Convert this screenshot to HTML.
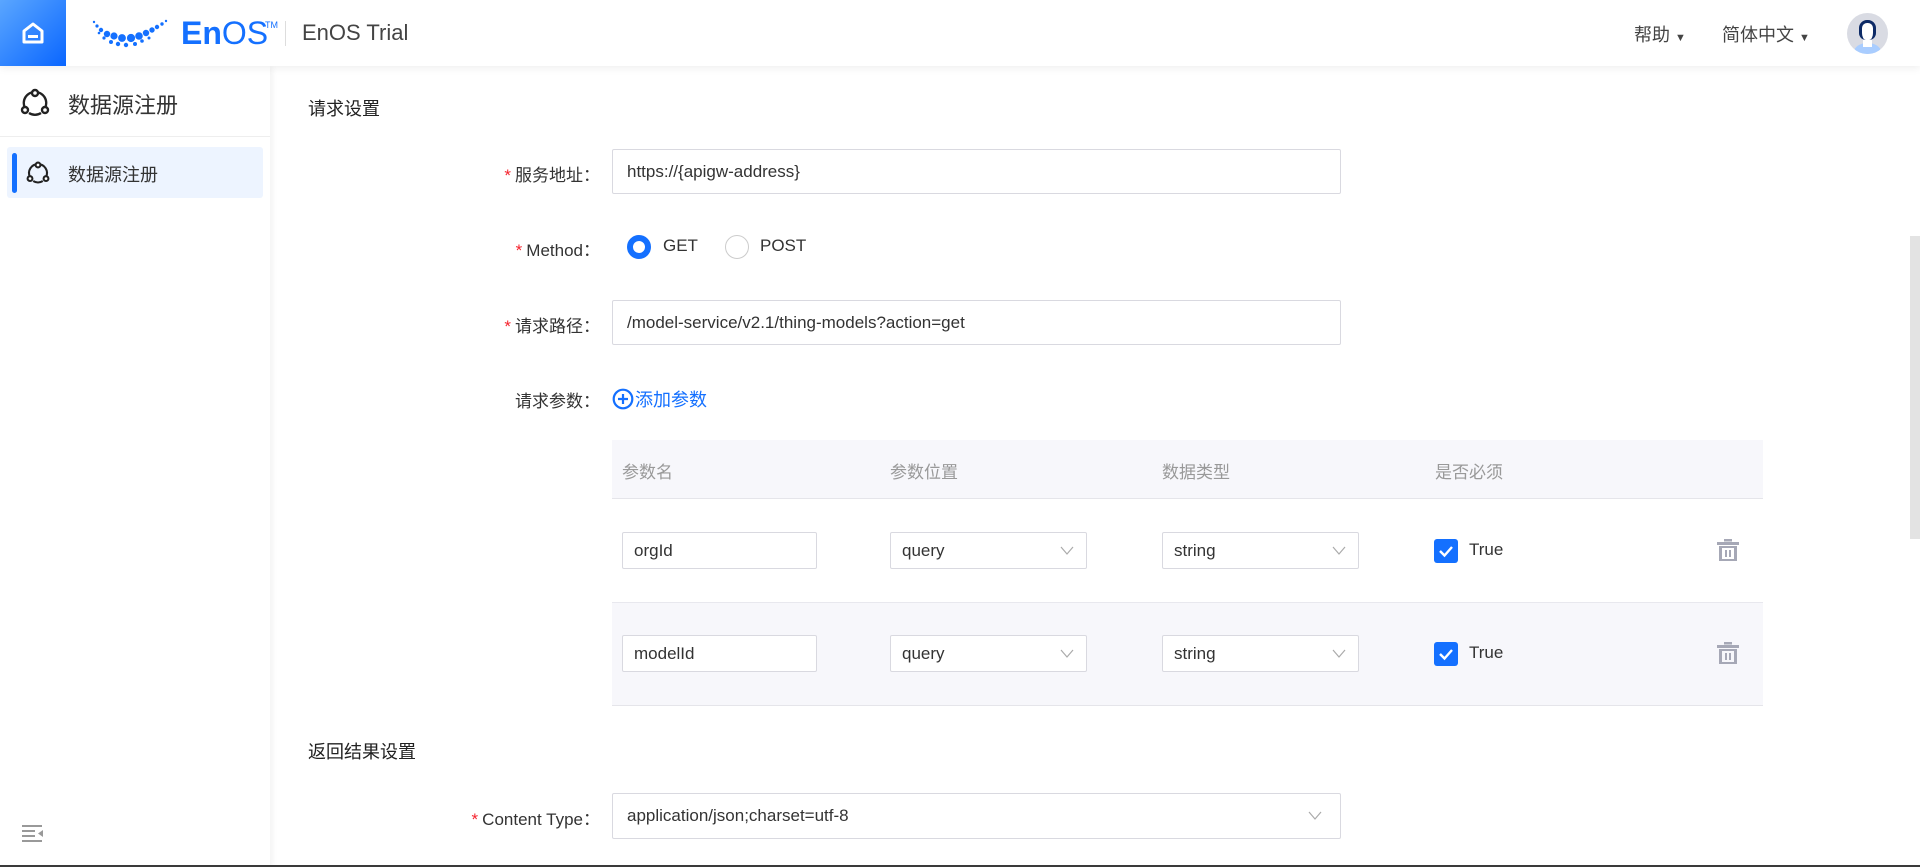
<!DOCTYPE html>
<html><head><meta charset="utf-8"><style>
*{box-sizing:border-box;margin:0;padding:0}
body{width:1920px;height:867px;overflow:hidden;background:#fff;font-family:"Liberation Sans","Noto Sans CJK SC",sans-serif;color:#333;position:relative}
.abs{position:absolute}
.hdr{left:0;top:0;width:1920px;height:66px;background:#fff;box-shadow:0 2px 8px rgba(0,0,0,.07);z-index:3}
.home{left:0;top:0;width:66px;height:66px;background:linear-gradient(135deg,#5aa6ff,#0a66ff)}
.side{left:0;top:66px;width:270px;height:801px;background:#fff;box-shadow:2px 0 6px rgba(0,0,0,.06);z-index:2}
.lbl{font-size:17px;color:#333;text-align:right;width:300px;left:300px}
.req{color:#f5222d;margin-right:4px}
.inp{border:1px solid #d9d9e0;border-radius:2px;background:#fff;font-size:17px;color:#333;padding-left:14px;display:flex;align-items:center}
.th{font-size:17px;color:#999;top:458px}
.chev{position:absolute;right:12px;top:50%;margin-top:-5px}
.cb{width:24px;height:24px;background:#1470ff;border-radius:3px}
</style></head><body>
<div class="abs hdr">
 <div class="abs home"><svg class="abs" style="left:21px;top:21px" width="24" height="24" viewBox="0 0 24 24"><path d="M3 10 L12 3 L21 10 V21 H3 Z" fill="none" stroke="#fff" stroke-width="3" stroke-linejoin="round"/><rect x="7" y="14" width="10" height="3" fill="#fff"/></svg></div>
 <svg class="abs" style="left:92px;top:19px" width="80" height="32" viewBox="0 0 80 32">
  <g fill="#1470ff"><circle cx="2" cy="3" r="1.2"/><circle cx="5" cy="7" r="1.6"/><circle cx="9" cy="11" r="2.2"/><circle cx="15" cy="15" r="3.2"/><circle cx="22" cy="17" r="3.6"/><circle cx="30" cy="19" r="3.9"/><circle cx="39" cy="19" r="4.1"/><circle cx="47" cy="17" r="3.8"/><circle cx="54" cy="14" r="3.2"/><circle cx="60" cy="11" r="2.7"/><circle cx="65" cy="8" r="2.2"/><circle cx="70" cy="5" r="1.7"/><circle cx="74" cy="2" r="1.2"/><circle cx="19" cy="23" r="2"/><circle cx="26" cy="25" r="2.2"/><circle cx="34" cy="26" r="2.2"/><circle cx="43" cy="25" r="2"/><circle cx="50" cy="22" r="1.8"/><circle cx="12" cy="19" r="1.6"/><circle cx="7" cy="14" r="1.3"/><circle cx="57" cy="19" r="1.5"/></g></svg>
 <div class="abs" style="left:181px;top:16px;font-size:32px;color:#1470ff;line-height:34px;white-space:nowrap"><b>En</b>OS</div>
 <div class="abs" style="left:265px;top:20px;font-size:9px;color:#1470ff">TM</div>
 <div class="abs" style="left:285px;top:21px;width:1px;height:25px;background:#ddd"></div>
 <div class="abs" style="left:302px;top:20px;font-size:22px;color:#444;line-height:26px">EnOS Trial</div>
 <div class="abs" style="left:1634px;top:21px;font-size:18px;color:#444">帮助 <span style="font-size:11px">▼</span></div>
 <div class="abs" style="left:1722px;top:21px;font-size:18px;color:#444">简体中文 <span style="font-size:11px">▼</span></div>
 <div class="abs" style="left:1847px;top:13px;width:41px;height:41px;border-radius:50%;background:#d9dbe3;overflow:hidden"><div class="abs" style="left:7px;top:30px;width:27px;height:18px;border-radius:50%;background:#a9cdff"></div><div class="abs" style="left:16px;top:24px;width:9px;height:10px;background:#fff"></div><div class="abs" style="left:12px;top:7px;width:17px;height:20px;border-radius:8px 8px 7px 7px;background:#fff;border:3px solid #0d2a66;border-bottom:none"></div></div>
</div>
<div class="abs side">
 <svg class="abs" style="left:20px;top:22px" width="30" height="30" viewBox="0 0 30 30"><path d="M15 4 A11 11 0 0 1 25 20 M21 25 A11 11 0 0 1 9 25 M5 20 A11 11 0 0 1 15 4" fill="none" stroke="#222" stroke-width="2.4"/><circle cx="15" cy="5" r="3" fill="#fff" stroke="#222" stroke-width="2.4"/><circle cx="25" cy="22" r="3" fill="#fff" stroke="#222" stroke-width="2.4"/><circle cx="5" cy="22" r="3" fill="#fff" stroke="#222" stroke-width="2.4"/></svg>
 <div class="abs" style="left:68px;top:22px;font-size:22px;color:#333">数据源注册</div>
 <div class="abs" style="left:0;top:70px;width:270px;height:1px;background:#eee"></div>
 <div class="abs" style="left:7px;top:81px;width:256px;height:51px;background:#edf4ff;border-radius:3px"></div>
 <div class="abs" style="left:12px;top:87px;width:5px;height:40px;background:#1470ff;border-radius:3px"></div>
 <svg class="abs" style="left:26px;top:95px" width="24" height="24" viewBox="0 0 30 30"><path d="M15 4 A11 11 0 0 1 25 20 M21 25 A11 11 0 0 1 9 25 M5 20 A11 11 0 0 1 15 4" fill="none" stroke="#222" stroke-width="2.6"/><circle cx="15" cy="5" r="3" fill="#fff" stroke="#222" stroke-width="2.6"/><circle cx="25" cy="22" r="3" fill="#fff" stroke="#222" stroke-width="2.6"/><circle cx="5" cy="22" r="3" fill="#fff" stroke="#222" stroke-width="2.6"/></svg>
 <div class="abs" style="left:68px;top:95px;font-size:18px;color:#333">数据源注册</div>
 <svg class="abs" style="left:22px;top:758px" width="22" height="18" viewBox="0 0 22 18"><g fill="#999"><rect x="0" y="1" width="20" height="2"/><rect x="0" y="6" width="13" height="2"/><rect x="0" y="11" width="13" height="2"/><rect x="0" y="16" width="20" height="2"/><path d="M21 6 L16 9.5 L21 13Z"/></g></svg>
</div>
<div class="abs" style="left:308px;top:95px;font-size:18px;color:#222">请求设置</div>
<div class="abs lbl" style="top:161px"><span class="req">*</span>服务地址：</div>
<div class="abs inp" style="left:612px;top:149px;width:729px;height:45px">https://{apigw-address}</div>
<div class="abs lbl" style="top:236px"><span class="req">*</span>Method：</div>
<div class="abs" style="left:627px;top:235px;width:24px;height:24px;border-radius:50%;border:6px solid #1470ff"></div>
<div class="abs" style="left:663px;top:236px;font-size:17px">GET</div>
<div class="abs" style="left:725px;top:235px;width:24px;height:24px;border-radius:50%;border:1px solid #ccc"></div>
<div class="abs" style="left:760px;top:236px;font-size:17px">POST</div>
<div class="abs lbl" style="top:312px"><span class="req">*</span>请求路径：</div>
<div class="abs inp" style="left:612px;top:300px;width:729px;height:45px">/model-service/v2.1/thing-models?action=get</div>
<div class="abs lbl" style="top:387px">请求参数：</div>
<div class="abs" style="left:612px;top:386px;font-size:18px;color:#1470ff;display:flex;align-items:center"><svg width="22" height="22" viewBox="0 0 22 22" style="margin-right:1px"><circle cx="11" cy="11" r="9.3" fill="none" stroke="#1470ff" stroke-width="2.2"/><path d="M11 6V16M6 11H16" stroke="#1470ff" stroke-width="2.2"/></svg>添加参数</div>
<div class="abs" style="left:612px;top:440px;width:1151px;height:59px;background:#f7f7fb;border-bottom:1px solid #e5e5ea"></div>
<div class="abs th" style="left:622px">参数名</div>
<div class="abs th" style="left:890px">参数位置</div>
<div class="abs th" style="left:1162px">数据类型</div>
<div class="abs th" style="left:1435px">是否必须</div>
<div class="abs" style="left:612px;top:602px;width:1151px;height:104px;background:#f7f7fb;border-top:1px solid #e8e8ee;border-bottom:1px solid #e5e5ea"></div>
<div class="abs inp" style="left:622px;top:532px;width:195px;height:37px;padding-left:11px">orgId</div>
<div class="abs inp" style="left:890px;top:532px;width:197px;height:37px;padding-left:11px">query<svg class="chev" width="14" height="9" viewBox="0 0 14 9"><path d="M1 1L7 8L13 1" fill="none" stroke="#aaa" stroke-width="1.2"/></svg></div>
<div class="abs inp" style="left:1162px;top:532px;width:197px;height:37px;padding-left:11px">string<svg class="chev" width="14" height="9" viewBox="0 0 14 9"><path d="M1 1L7 8L13 1" fill="none" stroke="#aaa" stroke-width="1.2"/></svg></div>
<div class="abs cb" style="left:1434px;top:539px"><svg width="24" height="24" viewBox="0 0 24 24"><path d="M6 12L10.5 16.5L18 8" fill="none" stroke="#fff" stroke-width="2.4"/></svg></div>
<div class="abs" style="left:1469px;top:540px;font-size:17px;color:#333">True</div>
<svg class="abs" style="left:1717px;top:539px" width="22" height="22" viewBox="0 0 22 22"><g fill="#a6a8b6"><rect x="7" y="0" width="8" height="2.5"/><rect x="0" y="3" width="22" height="3"/><path d="M2 7H20V22H2ZM5 9V20H17V9Z"/><rect x="8" y="11" width="2" height="7"/><rect x="12" y="11" width="2" height="7"/></g></svg>
<div class="abs inp" style="left:622px;top:635px;width:195px;height:37px;padding-left:11px">modelId</div>
<div class="abs inp" style="left:890px;top:635px;width:197px;height:37px;padding-left:11px">query<svg class="chev" width="14" height="9" viewBox="0 0 14 9"><path d="M1 1L7 8L13 1" fill="none" stroke="#aaa" stroke-width="1.2"/></svg></div>
<div class="abs inp" style="left:1162px;top:635px;width:197px;height:37px;padding-left:11px">string<svg class="chev" width="14" height="9" viewBox="0 0 14 9"><path d="M1 1L7 8L13 1" fill="none" stroke="#aaa" stroke-width="1.2"/></svg></div>
<div class="abs cb" style="left:1434px;top:642px"><svg width="24" height="24" viewBox="0 0 24 24"><path d="M6 12L10.5 16.5L18 8" fill="none" stroke="#fff" stroke-width="2.4"/></svg></div>
<div class="abs" style="left:1469px;top:643px;font-size:17px;color:#333">True</div>
<svg class="abs" style="left:1717px;top:642px" width="22" height="22" viewBox="0 0 22 22"><g fill="#a6a8b6"><rect x="7" y="0" width="8" height="2.5"/><rect x="0" y="3" width="22" height="3"/><path d="M2 7H20V22H2ZM5 9V20H17V9Z"/><rect x="8" y="11" width="2" height="7"/><rect x="12" y="11" width="2" height="7"/></g></svg>
<div class="abs" style="left:308px;top:738px;font-size:18px;color:#222">返回结果设置</div>
<div class="abs lbl" style="top:805px"><span class="req">*</span>Content Type：</div>
<div class="abs inp" style="left:612px;top:793px;width:729px;height:46px;padding-left:14px">application/json;charset=utf-8<svg class="chev" width="14" height="9" viewBox="0 0 14 9" style="right:18px"><path d="M1 1L7 8L13 1" fill="none" stroke="#aaa" stroke-width="1.2"/></svg></div>
<div class="abs" style="left:1910px;top:236px;width:10px;height:303px;background:#e3e3e3"></div>
<div class="abs" style="left:0;top:865px;width:1920px;height:2px;background:#3a3a3a;z-index:5"></div>
</body></html>
